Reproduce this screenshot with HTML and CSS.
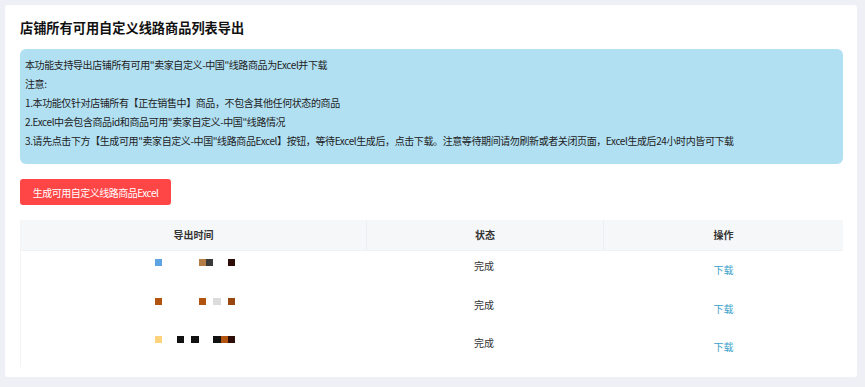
FILE: index.html
```html
<!DOCTYPE html>
<html>
	<head>
		<meta charset="utf-8" />
		<title>店铺所有可用自定义线路商品列表导出</title>
		<link rel="stylesheet" href="styles.css">
	</head>
	<body>

		<div class="card">
			<h1 class="title">店铺所有可用自定义线路商品列表导出</h1>

			<div class="notice">
				<p>本功能支持导出店铺所有可用"卖家自定义-中国"线路商品为Excel并下载</p>
				<p>注意:</p>
				<p>1.本功能仅针对店铺所有【正在销售中】商品，不包含其他任何状态的商品</p>
				<p>2.Excel中会包含商品id和商品可用"卖家自定义-中国"线路情况</p>
				<p>3.请先点击下方【生成可用"卖家自定义-中国"线路商品Excel】按钮，等待Excel生成后，点击下载。注意等待期间请勿刷新或者关闭页面，Excel生成后24小时内皆可下载</p>
			</div>

			<button class="btn-red">生成可用自定义线路商品Excel</button>

			<div class="table">
				<div class="tr th">
					<div class="td c1">导出时间</div>
					<div class="td c2">状态</div>
					<div class="td c3">操作</div>
				</div>

				<div class="tr">
					<div class="td c1">
						<div class="blur">
							<i class="b-blue"></i><i></i><i></i><i></i><i></i><i></i><i class="b-tan"></i><i class="b-dark"></i><i></i><i></i><i class="b-maroon"></i>
						</div>
					</div>
					<div class="td c2">完成</div>
					<div class="td c3"><a href="#">下载</a></div>
				</div>

				<div class="tr">
					<div class="td c1">
						<div class="blur">
							<i class="b-rust"></i><i></i><i></i><i></i><i></i><i></i><i class="b-rust"></i><i></i><i class="b-gray"></i><i></i><i class="b-brown"></i>
						</div>
					</div>
					<div class="td c2">完成</div>
					<div class="td c3"><a href="#">下载</a></div>
				</div>

				<div class="tr">
					<div class="td c1">
						<div class="blur">
							<i class="b-yellow"></i><i></i><i></i><i class="b-black"></i><i></i><i class="b-black"></i><i></i><i></i><i class="b-black"></i><i class="b-rust"></i><i class="b-maroon"></i>
						</div>
					</div>
					<div class="td c2">完成</div>
					<div class="td c3"><a href="#">下载</a></div>
				</div>
			</div>
		</div>

	</body>
</html>
```

FILE: styles.css
```css
body {
	margin: 0;
	padding: 5px 8px 10px 5px;
	background-color: #eef0f5;
	font-family: "Noto Sans CJK SC", "Noto Sans", sans-serif;
	color: #333;
}

p {
	margin: 0;
}

.card {
	background-color: #fff;
	border-radius: 3px;
	padding: 12px 14px 11px 15px;
	height: 349px;
}

.title {
	margin: 0;
	font-size: 13.2px;
	line-height: 22px;
	font-weight: bold;
	color: #111;
}

.notice {
	margin-top: 10px;
	background-color: #b1e0f3;
	border-radius: 6px;
	padding: 6px 5px 14px 5px;
	font-size: 10px;
	line-height: 19px;
	letter-spacing: -0.4px;
	color: #222;
}

.btn-red {
	display: block;
	margin-top: 15px;
	width: 151px;
	height: 26px;
	border: none;
	border-radius: 3px;
	background-color: #ff4646;
	color: #fff;
	font-family: inherit;
	font-size: 10px;
	letter-spacing: -0.5px;
	padding: 0;
}

/* 表格 */
.table {
	margin-top: 15px;
	border-left: 1px solid #f3f4f6;
}

.tr {
	display: flex;
	height: 38.5px;
	font-size: 10px;
}

.td {
	box-sizing: border-box;
}

.c1 {
	width: 346px;
}

.c2 {
	width: 237px;
	padding: 7px 0 0 107px;
	line-height: 16px;
}

.c3 {
	flex: 1;
	text-align: center;
}

.c3 a {
	display: inline-block;
	padding-top: 11px;
	line-height: 16px;
	color: #3a9fc9;
	text-decoration: none;
}

.th {
	height: 30px;
	background-color: #f6f7f9;
	font-weight: bold;
	border-bottom: 1px solid #f0f1f3;
}

.th .td {
	padding: 0;
	line-height: 30px;
	text-align: center;
}

.th .c1,
.th .c2 {
	border-right: 1px solid #eceef1;
}

.blur {
	display: grid;
	grid-template-columns: repeat(11, 7.3px);
	margin: 8px 0 0 134px;
	height: 7px;
}

.blur i {
	display: block;
	height: 7px;
}

.b-blue { background-color: #5ea4e2; }
.b-tan { background-color: #b47d45; }
.b-dark { background-color: #3a3a3a; }
.b-maroon { background-color: #2e0c08; }
.b-rust { background-color: #b2540f; }
.b-brown { background-color: #9a4610; }
.b-gray { background-color: #dcdcdc; }
.b-yellow { background-color: #ffd27c; }
.b-black { background-color: #111; }
```
